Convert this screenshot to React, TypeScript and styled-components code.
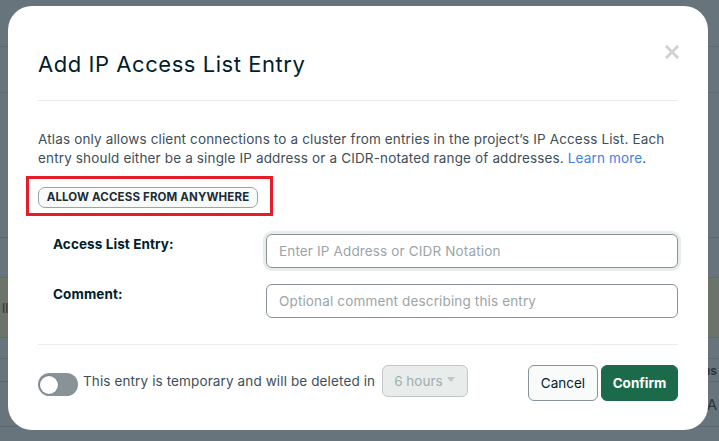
import React from "react";
import styled, { createGlobalStyle } from "styled-components";

const Global = createGlobalStyle`
  html, body { margin: 0; padding: 0; }
  body {
    width: 719px;
    height: 441px;
    overflow: hidden;
    background: #67747c;
    font-family: "Inter", "Open Sans", sans-serif;
  }
`;

const Backdrop = styled.div`
  display: flex;
  flex-direction: column;
  width: 719px;
  height: 441px;
  background: #67747c;
`;

const BgRow = styled.div<{ $h: number; $tone?: string }>`
  height: ${(p) => p.$h}px;
  flex: none;
  box-sizing: border-box;
  border-bottom: 1px solid #5d6970;
  background: ${(p) => p.$tone || "transparent"};
  display: flex;
  align-items: center;
  justify-content: space-between;
  padding: 0 2px 0 2px;
  font-size: 13px;
  color: #2b3439;
  overflow: hidden;
`;

const BgText = styled.span<{ $bold?: boolean; $size?: number }>`
  white-space: nowrap;
  font-weight: ${(p) => (p.$bold ? 700 : 400)};
  font-size: ${(p) => p.$size || 13}px;
`;

const Modal = styled.div`
  position: fixed;
  left: 8px;
  top: 6px;
  width: 700px;
  height: 424px;
  box-sizing: border-box;
  background: #ffffff;
  border-radius: 24px;
  padding: 44px 30px 0 30px;
  display: flex;
  flex-direction: column;
`;

const Header = styled.div`
  display: flex;
  align-items: flex-start;
  justify-content: space-between;
  padding-bottom: 22px;
  border-bottom: 1px solid #e8edeb;
`;

const Title = styled.h2`
  margin: 0;
  font-size: 22px;
  line-height: 28px;
  font-weight: 400;
  color: #001e2b;
  letter-spacing: 0.55px;
`;

const Close = styled.button`
  border: 0;
  background: none;
  padding: 0;
  margin: -5px -1px 0 0;
  width: 14px;
  height: 14px;
  display: flex;
  cursor: pointer;
`;

const Intro = styled.p`
  margin: 29px 0 0 0;
  font-size: 13.5px;
  line-height: 19px;
  letter-spacing: 0.15px;
  color: #3d4f58;
  white-space: nowrap;
`;

const Link = styled.a`
  color: #3f7fe6;
  text-decoration: none;
`;

const Highlight = styled.div`
  position: relative;
  align-self: flex-start;
  margin-top: 17px;
  &::after {
    content: "";
    position: absolute;
    left: -12px;
    top: -9px;
    right: -15px;
    bottom: -8px;
    border: 3px solid #e51d2a;
    pointer-events: none;
  }
`;

const GhostButton = styled.button`
  height: 21px;
  box-sizing: border-box;
  padding: 0;
  border: 1px solid #9aa4a8;
  border-radius: 7px;
  background: #f9fbfa;
  font-family: inherit;
  font-size: 11.5px;
  font-weight: 700;
  color: #1c2d38;
  letter-spacing: 0.15px;
  width: 220px;
  white-space: nowrap;
`;

const Form = styled.div`
  display: grid;
  grid-template-columns: 1fr 412px;
  row-gap: 16px;
  margin-top: 26px;
  padding-left: 15px;
  padding-bottom: 26px;
  border-bottom: 1px solid #e8edeb;
`;

const Label = styled.label`
  font-size: 13.5px;
  line-height: 20px;
  font-weight: 700;
  letter-spacing: 0.1px;
  color: #001e2b;
`;

const Input = styled.input<{ $focus?: boolean }>`
  height: 34px;
  box-sizing: border-box;
  border: 1px solid #889397;
  border-radius: 6px;
  padding: 0 12px;
  font-family: inherit;
  font-size: 13.5px;
  letter-spacing: 0.15px;
  color: #001e2b;
  outline: none;
  box-shadow: ${(p) => (p.$focus ? "0 0 0 3px #e8edeb" : "none")};
  &::placeholder {
    color: #9ba5a8;
  }
`;

const Footer = styled.div`
  display: flex;
  align-items: center;
  margin-top: 20px;
  height: 36px;
`;

const Toggle = styled.div`
  width: 40px;
  height: 23px;
  box-sizing: border-box;
  border-radius: 12px;
  background: #889397;
  flex: none;
  display: flex;
  align-items: center;
  padding: 0 2px;
  margin-top: 4px;
  &::before {
    content: "";
    width: 18px;
    height: 18px;
    border-radius: 50%;
    background: #ffffff;
    box-shadow: 0 0 0 1px #7c878b;
  }
`;

const FooterText = styled.span`
  margin-left: 5px;
  font-size: 13.5px;
  letter-spacing: 0.12px;
  color: #3d4f58;
  white-space: nowrap;
  margin-top: -3px;
`;

const Select = styled.div`
  margin-left: 7px;
  width: 86px;
  height: 32px;
  box-sizing: border-box;
  border: 1px solid #c1c7c6;
  border-radius: 6px;
  background: #e8edeb;
  display: flex;
  align-items: center;
  justify-content: space-between;
  padding: 0 12px 0 11px;
  font-size: 13.5px;
  color: #a2acae;
  margin-top: -4px;
`;

const Caret = styled.span`
  width: 0;
  height: 0;
  border-left: 4.5px solid transparent;
  border-right: 4.5px solid transparent;
  border-top: 5px solid #c1c7c6;
  margin-top: -3px;
`;

const Spacer = styled.div`
  flex: 1;
`;

const Btn = styled.button<{ $primary?: boolean; $w: number }>`
  width: ${(p) => p.$w}px;
  height: 36px;
  box-sizing: border-box;
  border-radius: 6px;
  font-family: inherit;
  font-size: 13.5px;
  padding: 0;
  border: 1px solid ${(p) => (p.$primary ? "#1b6b4b" : "#889397")};
  background: ${(p) => (p.$primary ? "#1b6b4b" : "#f9fbfa")};
  color: ${(p) => (p.$primary ? "#ffffff" : "#001e2b")};
  font-weight: ${(p) => (p.$primary ? 700 : 400)};
  & + & {
    margin-left: 3px;
  }
`;

export default function App() {
  return (
    <>
      <Global />
      <Backdrop>
        <BgRow $h={47} />
        <BgRow $h={46} />
        <BgRow $h={145} />
        <BgRow $h={40} />
        <BgRow $h={60} $tone="#6b7469">
          <BgText>ll</BgText>
        </BgRow>
        <BgRow $h={21} />
        <BgRow $h={23}>
          <span />
          <BgText $bold $size={12}>us</BgText>
        </BgRow>
        <BgRow $h={45}>
          <span />
          <BgText $size={15}>A</BgText>
        </BgRow>
      </Backdrop>
      <Modal>
        <Header>
          <Title>Add IP Access List Entry</Title>
          <Close aria-label="Close">
            <svg width="14" height="14" viewBox="0 0 14 14">
              <path d="M2 2 L12 12 M12 2 L2 12" stroke="#cfd3d4" strokeWidth="3" strokeLinecap="square" />
            </svg>
          </Close>
        </Header>
        <Intro>
          Atlas only allows client connections to a cluster from entries in the project’s IP Access List. Each
          <br />
          entry should either be a single IP address or a CIDR-notated range of addresses. <Link href="#">Learn more</Link>.
        </Intro>
        <Highlight>
          <GhostButton>ALLOW ACCESS FROM ANYWHERE</GhostButton>
        </Highlight>
        <Form>
          <Label>Access List Entry:</Label>
          <Input $focus placeholder="Enter IP Address or CIDR Notation" />
          <Label>Comment:</Label>
          <Input placeholder="Optional comment describing this entry" />
        </Form>
        <Footer>
          <Toggle />
          <FooterText>This entry is temporary and will be deleted in</FooterText>
          <Select>
            6 hours
            <Caret />
          </Select>
          <Spacer />
          <Btn $w={70}>Cancel</Btn>
          <Btn $w={77} $primary>Confirm</Btn>
        </Footer>
      </Modal>
    </>
  );
}
